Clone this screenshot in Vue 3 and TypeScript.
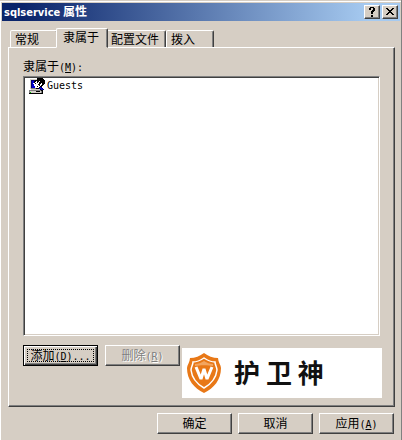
<script setup lang="ts">
import { ref } from 'vue'

const tabs: string[] = ['常规', '隶属于', '配置文件', '拨入']
const active = ref<string>('隶属于')
const groups: string[] = ['Guests']

// 16x16 member icon: one character per pixel
const palette: Record<string, string> = {
  k: '#000000',
  g: '#808080',
  s: '#d4d0c8',
  w: '#ffffff',
  b: '#0000d0',
  n: '#000070',
  l: '#00c000',
}
const pixels: string[] = [
  '........kkkkkk..',
  '.ssssssskkkkkkk.',
  '.snnnnkkkkkkkkkk',
  '.snbbkkwkkwkkkkk',
  '.snbbkwwkwkkkkkk',
  '.snbwwkwwwkkwkkk',
  '.snbbwwwwkkwwkk.',
  '.snbbwwwwwkwkk..',
  '.snbbbwwkwwkk...',
  '.snbbbwwwwkbn...',
  '.sgggggkkkbbbn..',
  '..ssssssssskbbn.',
  'ggggggggggggkk..',
  'gsssssskkkksgk..',
  'glssssssssssgk..',
  'kkkkkkkkkkkkkk..',
]
interface Dot { x: number; y: number; fill: string }
const dots: Dot[] = pixels.flatMap((row, y) =>
  [...row].flatMap((c, x) => (palette[c] ? [{ x, y, fill: palette[c] }] : [])),
)
</script>

<template>
  <main class="window">
    <header class="titlebar">
      <h1><span class="latin">sqlservice</span> 属性</h1>
      <button class="caption" type="button" aria-label="帮助">
        <svg width="12" height="10" viewBox="0 0 12 10" shape-rendering="crispEdges">
          <path d="M4 0h4v1h1v3h-1v1h-1v2h-2v-3h1v-1h1v-2h-2v2h-2v-2h1zM5 8h2v2h-2z" />
        </svg>
      </button>
      <button class="caption" type="button" aria-label="关闭">
        <svg width="12" height="10" viewBox="0 0 12 10" shape-rendering="crispEdges">
          <path d="M2 1h2v1h1v1h2v-1h1v-1h2v1h-1v1h-1v1h-1v1h1v1h1v1h1v1h-2v-1h-1v-1h-2v1h-1v1h-2v-1h1v-1h1v-1h1v-1h-1v-1h-1v-1h-1z" />
        </svg>
      </button>
    </header>

    <section class="body">
      <nav class="tabs" role="tablist">
        <button
          v-for="tab in tabs"
          :key="tab"
          type="button"
          role="tab"
          class="tab"
          :class="{ active: tab === active }"
          :aria-selected="tab === active"
          @click="active = tab"
        >{{ tab }}</button>
      </nav>

      <div class="panel" role="tabpanel">
        <p id="member-label" class="label">隶属于<span class="mono">(<u>M</u>):</span></p>
        <ul class="list" role="listbox" aria-labelledby="member-label">
          <li v-for="group in groups" :key="group" role="option">
            <svg class="icon" width="16" height="16" viewBox="0 0 16 16" shape-rendering="crispEdges">
              <rect v-for="d in dots" :key="`${d.x}-${d.y}`" :x="d.x" :y="d.y" width="1" height="1" :fill="d.fill" />
            </svg>
            <span class="mono">{{ group }}</span>
          </li>
        </ul>
        <div class="actions">
          <button class="btn default" type="button"><span class="focus">添加<span class="mono">(<u>D</u>)...</span></span></button>
          <button class="btn" type="button" disabled>删除<span class="mono">(<u>R</u>)</span></button>
          <div class="brand">
            <svg width="34" height="40" viewBox="0 0 34 40">
              <path fill="#e87817" d="M17 0C21 3 26 5 31 5C31 9 34 12 34 15C34 27 27 35 17 40C7 35 0 27 0 15C0 12 3 9 3 5C8 5 13 3 17 0Z" />
              <path fill="none" stroke="#fff" stroke-width="1.5" d="M17 5C20 7 24 9 28 9C28 12 30 14 30 17C29 26 24 31 17 35C10 31 5 26 4 17C4 14 6 12 6 9C10 9 14 7 17 5Z" />
              <path fill="#f2a560" d="M17 8C20 10 23 11 26 11L26 13C21 12 13 12 8 13L8 11C11 11 14 10 17 8Z" />
              <path fill="none" stroke="#fff" stroke-width="3" stroke-linejoin="bevel" d="M9 14L14 26L17 16L20 26L25 14" />
            </svg>
            <span>护 卫 神</span>
          </div>
        </div>
      </div>
    </section>

    <footer class="footer">
      <button class="btn" type="button">确定</button>
      <button class="btn" type="button">取消</button>
      <button class="btn" type="button">应用<span class="mono">(<u>A</u>)</span></button>
    </footer>
  </main>
</template>

<style>
body {
  background: #d6cec4;
}
</style>

<style scoped>
* {
  box-sizing: border-box;
}
.window {
  display: flex;
  flex-direction: column;
  min-height: 100vh;
  padding: 3px 2px 5px 2px;
  background: #d6cec4;
  box-shadow: inset -1px 0 #808080, inset 0 1px #d6cec4, inset 1px 2px #fff;
  color: #000;
  font: 12px/14px "Noto Sans CJK SC", sans-serif;
}
button {
  margin: 0;
  color: inherit;
  font: inherit;
}
.mono {
  font-family: "DejaVu Sans Mono", monospace;
  font-size: 10px;
  line-height: 1;
}
.titlebar {
  display: flex;
  align-items: center;
  gap: 2px;
  height: 18px;
  padding: 0 2px;
  background: linear-gradient(90deg, #0a246a 5%, #a6caf0 92%);
}
.titlebar h1 {
  flex: 1;
  margin: 0;
  color: #fff;
  font-size: 12px;
  line-height: 18px;
  font-weight: 700;
}
.latin {
  font-family: "DejaVu Sans Condensed", "DejaVu Sans", sans-serif;
  font-size: 11px;
}
.caption {
  display: flex;
  align-items: center;
  justify-content: center;
  width: 16px;
  height: 14px;
  padding: 0;
  border: 1px solid;
  border-color: #fff #404040 #404040 #fff;
  background: #d6cec4;
  box-shadow: inset -1px -1px #808080;
}
.body {
  flex: 1;
  display: flex;
  flex-direction: column;
  padding: 7px 5px 6px 6px;
}
.tabs {
  display: flex;
  align-items: flex-end;
  height: 20px;
  padding: 0 2px;
  margin-bottom: -1px;
}
.tab {
  min-width: 48px;
  height: 18px;
  padding: 0 6px 0 4px;
  border: 1px solid;
  border-color: #fff #404040 transparent #fff;
  border-radius: 2px 2px 0 0;
  background: #d6cec4;
  box-shadow: inset -1px 0 #808080;
  text-align: left;
}
.tab.active {
  position: relative;
  z-index: 1;
  height: 20px;
  margin: 0 -2px;
  padding: 0 8px 2px 6px;
  border-bottom-color: #d6cec4;
}
.panel {
  flex: 1;
  display: flex;
  flex-direction: column;
  padding: 11px 12px 8px 14px;
  border: 1px solid;
  border-color: #fff #404040 #404040 #fff;
  box-shadow: inset -1px -1px #808080;
}
.label {
  margin: 0 0 3px;
}
.list {
  flex: 1;
  margin: 0 2px 9px 0;
  padding: 0;
  border: 1px solid;
  border-color: #808080 #fff #fff #808080;
  background: #fff;
  box-shadow: inset 1px 1px #404040, inset -1px -1px #d6cec4;
  list-style: none;
}
.list li {
  display: flex;
  align-items: center;
  gap: 2px;
  padding: 1px 5px;
}
.icon {
  flex: none;
}
.actions {
  display: flex;
  align-items: flex-start;
  gap: 7px;
}
.btn {
  flex: none;
  width: 75px;
  height: 21px;
  padding: 0 0 2px;
  border: 1px solid;
  border-color: #fff #404040 #404040 #fff;
  background: #d6cec4;
  box-shadow: inset -1px -1px #808080;
  text-align: center;
  white-space: nowrap;
}
.btn.default {
  display: flex;
  border-color: #000;
  padding: 3px;
  box-shadow: inset 1px 1px #fff, inset -1px -1px #404040, inset -2px -2px #808080;
}
.focus {
  flex: 1;
  height: 13px;
  border: 1px dotted #000;
  line-height: 10px;
}
.btn:disabled {
  color: #808080;
  text-shadow: 1px 1px #fff;
}
.brand {
  flex: 1;
  display: flex;
  align-items: center;
  gap: 13px;
  height: 50px;
  margin: 3px 0 0 -5px;
  padding-left: 5px;
  background: #fff;
  color: #111;
  font-size: 26px;
  line-height: 40px;
  font-weight: 700;
  white-space: nowrap;
}
.brand span {
  padding-bottom: 2px;
}
.footer {
  display: flex;
  justify-content: flex-end;
  gap: 6px;
  padding: 0 6px 1px 0;
}
</style>
